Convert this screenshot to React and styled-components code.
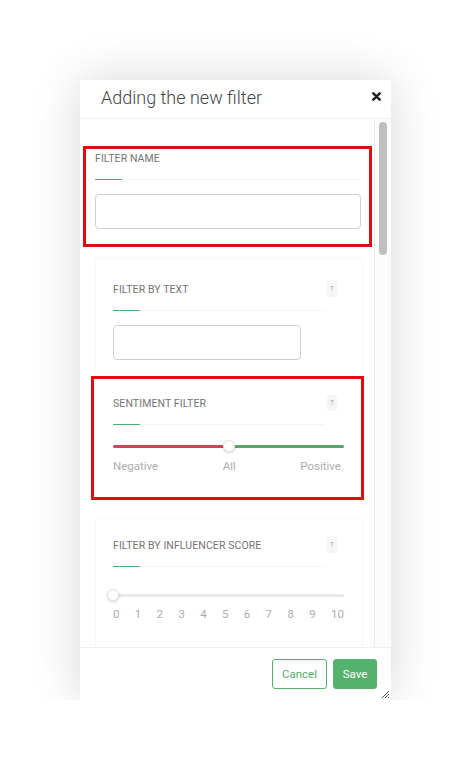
import React from 'react'
import styled, { createGlobalStyle } from 'styled-components'

const GlobalStyle = createGlobalStyle`
  html, body {
    margin: 0;
    padding: 0;
    background: #fff;
  }
  body {
    font-family: Roboto, "Liberation Sans", sans-serif;
  }
`

const Page = styled.div`
  display: flex;
  justify-content: center;
  padding-top: 80px;
`

const Modal = styled.div`
  position: relative;
  width: 311px;
  height: 620px;
  display: flex;
  flex-direction: column;
  background: #fff;
  box-shadow: 0 0 45px rgba(0, 0, 0, 0.16);
`

const Header = styled.div`
  height: 39px;
  box-sizing: border-box;
  display: flex;
  align-items: center;
  justify-content: space-between;
  padding: 0 10px 3px 21px;
  border-bottom: 1px solid #f2f2f2;
`

const Title = styled.h2`
  margin: 0;
  font-size: 18px;
  font-weight: 300;
  color: #444;
  line-height: 22px;
`

const Close = styled.button`
  border: 0;
  background: none;
  padding: 0;
  width: 9px;
  height: 9px;
  display: flex;
  margin-top: -2px;
`

const BodyWrap = styled.div`
  flex: 1;
  min-height: 0;
  display: flex;
`

const Content = styled.div`
  flex: 1;
  overflow: hidden;
`

const Rail = styled.div`
  width: 17px;
  box-sizing: border-box;
  background: #fcfcfc;
  border-left: 1px solid #ececec;
  padding: 3px 4px 0 4px;
`

const Thumb = styled.div`
  height: ${p => p.$size}px;
  border-radius: 4px;
  background: #bfbfbf;
`

const Marked = styled.div`
  box-sizing: border-box;
  border: 3px solid #e00d0d;
  width: ${p => p.$width}px;
  margin: ${p => p.$margin};
  padding: ${p => p.$padding};
`

const Card = styled.div`
  box-sizing: border-box;
  width: 268px;
  margin: ${p => p.$margin || '11px 0 0 15px'};
  padding: ${p => p.$padding || '22px 18px 12px 17px'};
  border: 1px solid #f8f8f8;
`

const TitleRow = styled.div`
  height: 16px;
  display: flex;
  align-items: center;
  justify-content: space-between;
`

const Label = styled.div`
  font-size: 10.5px;
  color: #737373;
  text-transform: uppercase;
  letter-spacing: 0.1px;
`

const Hint = styled.span`
  width: 10px;
  height: 16px;
  margin-right: 7px;
  background: #f5f5f5;
  border-radius: 2px;
  color: #999;
  font-size: 7px;
  display: flex;
  align-items: center;
  justify-content: center;
`

const Divider = styled.div`
  margin-top: 13px;
  height: 1px;
  width: ${p => p.$full ? '100%' : 'calc(100% - 19px)'};
  background: linear-gradient(to right, #4caf67 27px, #f5f5f5 27px);
`

const Input = styled.input`
  display: block;
  box-sizing: border-box;
  margin-top: 14px;
  width: ${p => p.$width}px;
  height: 35px;
  border: 1px solid #cfcfcf;
  border-radius: 4px;
  background: #fff;
  outline: none;
  font-family: inherit;
  padding: 0 10px;
`

const SliderBox = styled.div`
  position: relative;
  height: 12px;
  margin-top: ${p => p.$top}px;
  display: flex;
  align-items: center;
`

const Track = styled.div`
  width: 100%;
  height: 3px;
  border-radius: 2px;
  background: ${p => p.$bg};
`

const Handle = styled.span`
  position: absolute;
  top: 0;
  left: ${p => p.$at};
  width: 12px;
  height: 12px;
  margin-left: -6px;
  box-sizing: border-box;
  border-radius: 50%;
  background: #fff;
  border: 1px solid #e4e4e4;
  box-shadow: 0 1px 3px rgba(0, 0, 0, 0.18);
`

const Ticks = styled.div`
  display: flex;
  justify-content: space-between;
  margin-top: ${p => p.$top}px;
  padding-right: ${p => p.$right || 0}px;
  font-size: 11.5px;
  line-height: 14px;
  color: #adadad;
`

const Footer = styled.div`
  height: 53px;
  box-sizing: border-box;
  border-top: 1px solid #efefef;
  display: flex;
  align-items: center;
  justify-content: flex-end;
  gap: 6px;
  padding: 0 14px 0 0;
`

const Button = styled.button`
  height: 30px;
  width: ${p => p.$width}px;
  box-sizing: border-box;
  border-radius: 3px;
  font-family: inherit;
  font-size: 11.5px;
  padding: 0;
  border: 1px solid #55b06e;
  color: ${p => p.$primary ? '#fff' : '#4fab69'};
  background: ${p => p.$primary ? '#55b26d' : '#fff'};
`

const Grip = styled.svg`
  position: absolute;
  right: 1px;
  bottom: 1px;
`

const CardHead = ({ title }) => (
  <>
    <TitleRow>
      <Label>{title}</Label>
      <Hint>?</Hint>
    </TitleRow>
    <Divider />
  </>
)

const scores = ['0', '1', '2', '3', '4', '5', '6', '7', '8', '9', '10']

export default function App() {
  return (
    <Page>
      <GlobalStyle />
      <Modal>
        <Header>
          <Title>Adding the new filter</Title>
          <Close aria-label="Close">
            <svg width="9" height="9" viewBox="0 0 9 9">
              <path d="M1.3 1.3 L7.7 7.7 M7.7 1.3 L1.3 7.7" stroke="#1d1d1d" strokeWidth="2.4" strokeLinecap="round" />
            </svg>
          </Close>
        </Header>

        <BodyWrap>
          <Content>
            <Marked $width={289} $margin="27px 0 0 3px" $padding="1px 8px 15px 9px">
              <TitleRow>
                <Label>Filter name</Label>
              </TitleRow>
              <Divider $full />
              <Input $width={266} />
            </Marked>

            <Card>
              <CardHead title="Filter by text" />
              <Input $width={188} />
            </Card>

            <Marked $width={273} $margin="3px 0 0 11px" $padding="16px 17px 24px 19px">
              <CardHead title="Sentiment filter" />
              <SliderBox $top={15}>
                <Track $bg="linear-gradient(to right, #c94659 50%, #58a86a 50%)" />
                <Handle $at="50%" />
              </SliderBox>
              <Ticks $top={7} $right={3}>
                <span>Negative</span>
                <span>All</span>
                <span>Positive</span>
              </Ticks>
            </Marked>

            <Card $margin="18px 0 0 15px" $padding="18px 18px 40px 17px">
              <CardHead title="Filter by influencer score" />
              <SliderBox $top={22}>
                <Track $bg="#e9e9e9" />
                <Handle $at="0%" />
              </SliderBox>
              <Ticks $top={6}>
                {scores.map(s => <span key={s}>{s}</span>)}
              </Ticks>
            </Card>
          </Content>
          <Rail>
            <Thumb $size={133} />
          </Rail>
        </BodyWrap>

        <Footer>
          <Button $width={55}>Cancel</Button>
          <Button $width={44} $primary>Save</Button>
        </Footer>

        <Grip width="10" height="10" viewBox="0 0 10 10">
          <path d="M2 9 L9 2 M5 9 L9 5 M8 9 L9 8" stroke="#555" strokeWidth="1" />
        </Grip>
      </Modal>
    </Page>
  )
}
